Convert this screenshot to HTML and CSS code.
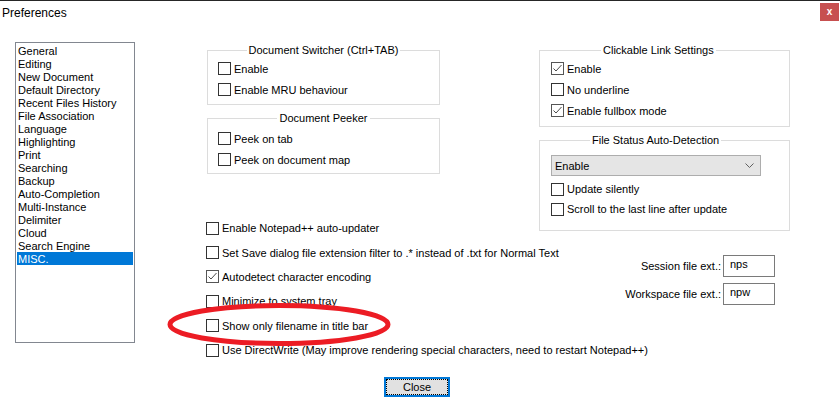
FILE: index.html
```html
<!DOCTYPE html>
<html>
<head>
<meta charset="utf-8">
<title>Preferences</title>
<link rel="stylesheet" href="styles.css">
</head>
<body>
<div class="dialog">
  <div class="topline"></div>
  <div class="titlebar">
    <span class="title">Preferences</span>
    <span class="close">x</span>
  </div>
  <div class="main">
    <ul class="catlist">
      <li>General</li>
      <li>Editing</li>
      <li>New Document</li>
      <li>Default Directory</li>
      <li>Recent Files History</li>
      <li>File Association</li>
      <li>Language</li>
      <li>Highlighting</li>
      <li>Print</li>
      <li>Searching</li>
      <li>Backup</li>
      <li>Auto-Completion</li>
      <li>Multi-Instance</li>
      <li>Delimiter</li>
      <li>Cloud</li>
      <li>Search Engine</li>
      <li class="sel">MISC.</li>
    </ul>
    <div class="panel">
      <div class="col-left">
        <fieldset class="group">
          <legend>Document Switcher (Ctrl+TAB)</legend>
          <div class="group-body sw">
            <label class="cb"><span class="box"></span>Enable</label>
            <label class="cb"><span class="box"></span>Enable MRU behaviour</label>
          </div>
        </fieldset>
        <fieldset class="group">
          <legend>Document Peeker</legend>
          <div class="group-body pk">
            <label class="cb"><span class="box"></span>Peek on tab</label>
            <label class="cb"><span class="box"></span>Peek on document map</label>
          </div>
        </fieldset>
      </div>
      <div class="col-right">
        <fieldset class="group">
          <legend class="lg-link">Clickable Link Settings</legend>
          <div class="group-body lk">
            <label class="cb"><span class="box on"><svg viewBox="0 0 11 11" width="11" height="11"><polyline points="1.5,5.5 4,8 9.5,2" fill="none" stroke="#4a4a4a" stroke-width="1"/></svg></span>Enable</label>
            <label class="cb"><span class="box"></span>No underline</label>
            <label class="cb"><span class="box on"><svg viewBox="0 0 11 11" width="11" height="11"><polyline points="1.5,5.5 4,8 9.5,2" fill="none" stroke="#4a4a4a" stroke-width="1"/></svg></span>Enable fullbox mode</label>
          </div>
        </fieldset>
        <fieldset class="group">
          <legend class="lg-status">File Status Auto-Detection</legend>
          <div class="group-body st">
            <div class="select"><span>Enable</span><svg width="9" height="5" viewBox="0 0 9 5"><polyline points="0.5,0.5 4.5,4.5 8.5,0.5" fill="none" stroke="#606060" stroke-width="1"/></svg></div>
            <div class="st-rows">
              <label class="cb h20"><span class="box"></span>Update silently</label>
              <label class="cb h20"><span class="box"></span>Scroll to the last line after update</label>
            </div>
          </div>
        </fieldset>
        <div class="exts">
          <div class="ext-row"><span>Session file ext.:</span><span class="input">nps</span></div>
          <div class="ext-row"><span>Workspace file ext.:</span><span class="input">npw</span></div>
        </div>
      </div>
      <div class="checks">
        <label class="cb"><span class="box"></span>Enable Notepad++ auto-updater</label>
        <label class="cb"><span class="box"></span>Set Save dialog file extension filter to .* instead of .txt for Normal Text</label>
        <label class="cb"><span class="box on"><svg viewBox="0 0 11 11" width="11" height="11"><polyline points="1.5,5.5 4,8 9.5,2" fill="none" stroke="#4a4a4a" stroke-width="1"/></svg></span>Autodetect character encoding</label>
        <label class="cb"><span class="box"></span>Minimize to system tray</label>
        <label class="cb"><span class="box"></span>Show only filename in title bar</label>
        <label class="cb"><span class="box"></span>Use DirectWrite (May improve rendering special characters, need to restart Notepad++)</label>
      </div>
    </div>
  </div>
  <div class="footer">
    <button class="btn">Close</button>
  </div>
  <svg class="annot" width="840" height="408" viewBox="0 0 840 408">
    <ellipse cx="279" cy="324.5" rx="109" ry="19" fill="none" stroke="#ec1c24" stroke-width="5"/>
  </svg>
</div>
</body>
</html>
```

FILE: styles.css
```css
* { box-sizing: border-box; }

body {
  margin: 0;
  background: #fff;
  font-family: "Liberation Sans", Arial, sans-serif;
  font-size: 11px;
  color: #000;
}

.dialog {
  position: relative;
  width: 840px;
  height: 408px;
  overflow: hidden;
}

.topline {
  height: 1px;
  background: #262626;
}

.titlebar {
  display: flex;
  justify-content: space-between;
  align-items: flex-start;
  height: 26px;
}

.title {
  font-size: 12px;
  line-height: 14px;
  padding: 5px 0 0 2px;
}

.close {
  width: 19px;
  height: 18px;
  margin: 2px 1px 0 0;
  background: #c75050;
  color: #fff;
  font-weight: bold;
  font-size: 10px;
  line-height: 1;
  display: flex;
  align-items: center;
  justify-content: center;
}

.main {
  display: flex;
  align-items: flex-start;
  padding: 15px 0 0 15px;
}

.catlist {
  list-style: none;
  margin: 0;
  padding: 1px;
  width: 120px;
  height: 301px;
  border: 1px solid #828790;
  flex: none;
}

.catlist li {
  height: 13px;
  line-height: 12px;
  padding: 1px 0 0 1px;
  white-space: nowrap;
}

.catlist li.sel {
  background: #0078d7;
  color: #fff;
}

.panel {
  display: grid;
  grid-template-columns: 333px 251px;
  grid-template-rows: 132px auto;
  margin-left: 71px;
}

.col-left {
  grid-row: 1;
  grid-column: 1;
  width: 233px;
  margin: 2px 0 0 1px;
  display: flex;
  flex-direction: column;
  gap: 7px;
}

.col-right {
  grid-row: 1 / span 2;
  grid-column: 2;
  margin-top: 2px;
  display: flex;
  flex-direction: column;
  gap: 7px;
}

.group {
  margin: 0;
  padding: 0;
  border: 1px solid #dcdcdc;
  min-width: 0;
}

.group legend {
  padding: 0 2px;
  margin: 0 auto;
  line-height: 13px;
}

.group legend.lg-link {
  margin: 0 auto 0 61px;
}

.group legend.lg-status {
  margin: 0 auto 0 50px;
}

.group-body {
  padding-left: 10px;
}

.group-body.sw { padding-top: 1px; padding-bottom: 4px; }
.group-body.pk { padding-top: 3px; padding-bottom: 3px; }
.group-body.lk { padding-top: 1px; padding-bottom: 5px; padding-left: 11px; }
.group-body.st { padding-top: 8px; padding-bottom: 11px; padding-left: 11px; }

.cb {
  display: flex;
  align-items: center;
  height: 21px;
  white-space: nowrap;
}

.cb.h20 { height: 20px; }

.box {
  width: 13px;
  height: 13px;
  border: 1px solid #333;
  background: #fff;
  margin-right: 3px;
  flex: none;
  display: flex;
  align-items: center;
  justify-content: center;
}

.box.on {
  border-color: #555;
}

.select {
  width: 210px;
  height: 21px;
  background: #e5e5e5;
  border: 1px solid #adadad;
  display: flex;
  align-items: center;
  justify-content: space-between;
  padding: 0 6px 0 3px;
}

.st-rows {
  margin-top: 3px;
}

.exts {
  margin: 17px 15px 0 0;
  display: flex;
  flex-direction: column;
  align-items: flex-end;
  gap: 6px;
}

.ext-row {
  display: flex;
  align-items: center;
  gap: 2px;
}

.input {
  width: 52px;
  height: 22px;
  border: 1px solid #7a7a7a;
  padding: 2px 0 0 6px;
  line-height: 13px;
}

.checks {
  grid-row: 2;
  grid-column: 1 / span 2;
  margin-top: 42px;
  display: flex;
  flex-direction: column;
}

.checks .cb {
  height: 24.4px;
}

.footer {
  display: flex;
  justify-content: center;
  padding-right: 6px;
  margin-top: 14.6px;
}

.btn {
  width: 66px;
  height: 20px;
  padding: 0;
  border: 2px solid #0078d7;
  background: #e1e1e1;
  font-family: "Liberation Sans", Arial, sans-serif;
  font-size: 11px;
  color: #000;
  outline: 1px dotted #000;
  outline-offset: -3px;
}

.annot {
  position: absolute;
  left: 0;
  top: 0;
  pointer-events: none;
}
```
